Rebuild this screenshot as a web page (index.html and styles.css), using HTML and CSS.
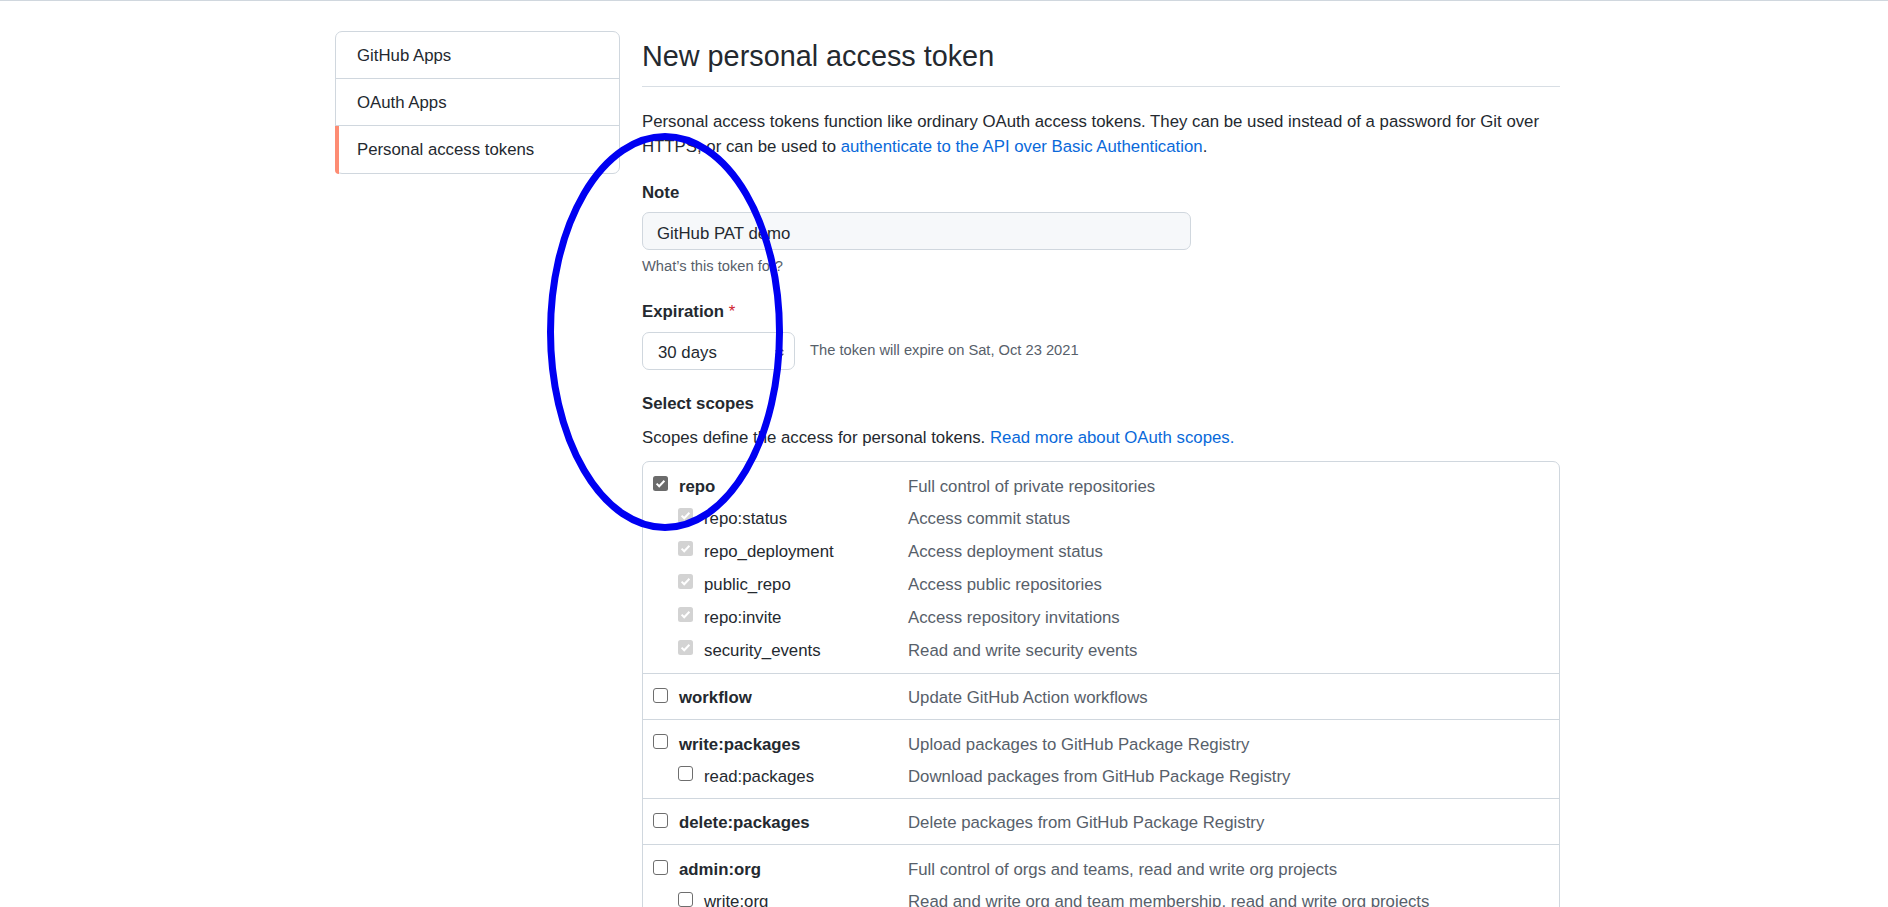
FILE: index.html
```html
<!DOCTYPE html>
<html lang="en">
<head>
<meta charset="utf-8">
<title>New personal access token</title>
<link rel="stylesheet" href="styles.css">
</head>
<body>
<div class="topline"></div>
<div class="layout">
  <nav class="menu">
    <a class="menu-item">GitHub Apps</a>
    <a class="menu-item">OAuth Apps</a>
    <a class="menu-item selected">Personal access tokens</a>
  </nav>
  <main class="main">
    <div class="subhead"><h2 class="subhead-heading">New personal access token</h2></div>
    <p class="lead">Personal access tokens function like ordinary OAuth access tokens. They can be used instead of a password for Git over HTTPS, or can be used to <a class="link">authenticate to the API over Basic Authentication</a>.</p>

    <div class="label label-note">Note</div>
    <input class="input" type="text" value="GitHub PAT demo">
    <div class="hint">What’s this token for?</div>

    <div class="label label-exp">Expiration <span class="req">*</span></div>
    <div class="select-row">
      <div class="select">
        <span>30 days</span>
        <svg class="select-arrow" width="19" height="19" viewBox="0 0 16 16"><path fill="#586069" d="M4.427 9.427l3.396 3.396a.251.251 0 00.354 0l3.396-3.396A.25.25 0 0011.396 9H4.604a.25.25 0 00-.177.427zM4.423 6.47L7.82 3.072a.25.25 0 01.354 0L11.57 6.47a.25.25 0 01-.177.427H4.6a.25.25 0 01-.177-.427z"/></svg>
      </div>
      <span class="expire-note">The token will expire on Sat, Oct 23 2021</span>
    </div>

    <div class="label label-scopes">Select scopes</div>
    <p class="scopes-intro">Scopes define the access for personal tokens. <a class="link">Read more about OAuth scopes.</a></p>

    <div class="scopes">
      <div class="scope-group">
        <div class="scope-row">
          <div class="scope-name top"><span class="cb cb-checked"><svg width="15" height="15" viewBox="0 0 15 15"><path d="M3.6 7.6l2.6 2.6 5.2-5.4" stroke="#fff" stroke-width="2" fill="none"/></svg></span>repo</div>
          <div class="scope-desc">Full control of private repositories</div>
        </div>
        <div class="scope-row tall">
          <div class="scope-name sub"><span class="cb cb-disabled"><svg width="15" height="15" viewBox="0 0 15 15"><path d="M3.6 7.6l2.6 2.6 5.2-5.4" stroke="#fff" stroke-width="2" fill="none"/></svg></span>repo:status</div>
          <div class="scope-desc">Access commit status</div>
        </div>
        <div class="scope-row tall">
          <div class="scope-name sub"><span class="cb cb-disabled"><svg width="15" height="15" viewBox="0 0 15 15"><path d="M3.6 7.6l2.6 2.6 5.2-5.4" stroke="#fff" stroke-width="2" fill="none"/></svg></span>repo_deployment</div>
          <div class="scope-desc">Access deployment status</div>
        </div>
        <div class="scope-row tall">
          <div class="scope-name sub"><span class="cb cb-disabled"><svg width="15" height="15" viewBox="0 0 15 15"><path d="M3.6 7.6l2.6 2.6 5.2-5.4" stroke="#fff" stroke-width="2" fill="none"/></svg></span>public_repo</div>
          <div class="scope-desc">Access public repositories</div>
        </div>
        <div class="scope-row tall">
          <div class="scope-name sub"><span class="cb cb-disabled"><svg width="15" height="15" viewBox="0 0 15 15"><path d="M3.6 7.6l2.6 2.6 5.2-5.4" stroke="#fff" stroke-width="2" fill="none"/></svg></span>repo:invite</div>
          <div class="scope-desc">Access repository invitations</div>
        </div>
        <div class="scope-row tall">
          <div class="scope-name sub"><span class="cb cb-disabled"><svg width="15" height="15" viewBox="0 0 15 15"><path d="M3.6 7.6l2.6 2.6 5.2-5.4" stroke="#fff" stroke-width="2" fill="none"/></svg></span>security_events</div>
          <div class="scope-desc">Read and write security events</div>
        </div>
      </div>

      <div class="scope-group">
        <div class="scope-row">
          <div class="scope-name top"><span class="cb cb-empty"></span>workflow</div>
          <div class="scope-desc">Update GitHub Action workflows</div>
        </div>
      </div>

      <div class="scope-group">
        <div class="scope-row">
          <div class="scope-name top"><span class="cb cb-empty"></span>write:packages</div>
          <div class="scope-desc">Upload packages to GitHub Package Registry</div>
        </div>
        <div class="scope-row">
          <div class="scope-name sub"><span class="cb cb-empty"></span>read:packages</div>
          <div class="scope-desc">Download packages from GitHub Package Registry</div>
        </div>
      </div>

      <div class="scope-group">
        <div class="scope-row">
          <div class="scope-name top"><span class="cb cb-empty"></span>delete:packages</div>
          <div class="scope-desc">Delete packages from GitHub Package Registry</div>
        </div>
      </div>

      <div class="scope-group">
        <div class="scope-row">
          <div class="scope-name top"><span class="cb cb-empty"></span>admin:org</div>
          <div class="scope-desc">Full control of orgs and teams, read and write org projects</div>
        </div>
        <div class="scope-row">
          <div class="scope-name sub"><span class="cb cb-empty"></span>write:org</div>
          <div class="scope-desc">Read and write org and team membership, read and write org projects</div>
        </div>
        <div class="scope-row">
          <div class="scope-name sub"><span class="cb cb-empty"></span>read:org</div>
          <div class="scope-desc">Read org and team membership, read org projects</div>
        </div>
      </div>
    </div>
  </main>
</div>
<svg class="annotation" width="250" height="410" viewBox="0 0 250 410"><ellipse cx="125" cy="205" rx="114.5" ry="195.5" fill="none" stroke="#0000f2" stroke-width="7"/></svg>
</body>
</html>
```

FILE: styles.css
```css
html, body {
  margin: 0;
  padding: 0;
  overflow: hidden;
}
body {
  position: relative;
  background: #ffffff;
  color: #24292f;
  font-family: "Liberation Sans", Arial, sans-serif;
  font-size: 16.8px;
  line-height: 25.2px;
}
.topline {
  height: 1px;
  background: #d0d7de;
}
.layout {
  display: flex;
  gap: 22px;
  margin-left: 335px;
  padding-top: 30px;
}
.menu {
  width: 285px;
  flex: none;
  align-self: flex-start;
  box-sizing: border-box;
  border: 1px solid #d0d7de;
  border-radius: 7px;
  display: flex;
  flex-direction: column;
}
.menu-item {
  position: relative;
  display: block;
  padding: 10.5px 21px;
  color: #24292f;
  text-decoration: none;
}
.menu-item + .menu-item {
  border-top: 1px solid #d0d7de;
}
.menu-item.selected::before {
  content: "";
  position: absolute;
  left: -1px;
  top: 0;
  bottom: -1px;
  width: 4px;
  background: #fd8c73;
  border-bottom-left-radius: 7px;
}
.main {
  width: 918px;
  flex: none;
}
.subhead {
  padding-top: 4px;
  padding-bottom: 7.8px;
  border-bottom: 1px solid #d8dee4;
  margin-bottom: 21.8px;
}
.subhead-heading {
  margin: 0;
  font-size: 28.8px;
  line-height: 43.2px;
  font-weight: 400;
}
.lead {
  margin: 0;
}
.link {
  color: #0969da;
  text-decoration: none;
}
.label {
  font-weight: 700;
}
.label-note { margin-top: 20.6px; }
.label-exp { margin-top: 20.8px; }
.label-scopes { margin-top: 20.8px; }
.req { color: #cf222e; font-weight: 400; }
.input {
  display: block;
  box-sizing: border-box;
  margin: 7px 0 0;
  width: 549px;
  height: 38px;
  padding: 5px 14px 0;
  font: inherit;
  font-size: 16.8px;
  color: #24292f;
  background: #f6f8fa;
  border: 1px solid #d0d7de;
  border-radius: 7px;
  outline: none;
}
.hint {
  margin-top: 6.4px;
  font-size: 14.7px;
  line-height: 21.6px;
  color: #57606a;
}
.select-row {
  display: flex;
  align-items: center;
  gap: 15px;
  margin-top: 8px;
}
.select {
  box-sizing: border-box;
  width: 153px;
  height: 38px;
  padding: 6.8px 5px 0 15px;
  border: 1px solid #d0d7de;
  border-radius: 7px;
  display: flex;
  align-items: flex-start;
  justify-content: space-between;
}
.select-arrow {
  margin-top: 3px;
}
.expire-note {
  font-size: 14.7px;
  line-height: 21.6px;
  color: #57606a;
}
.scopes-intro {
  margin: 8.8px 0 0;
}
.scopes {
  margin-top: 11px;
  border: 1px solid #d0d7de;
  border-radius: 7px;
}
.scope-group {
  padding: 7px 10px 6.6px;
}
.scope-group + .scope-group {
  border-top: 1px solid #d0d7de;
}
.scope-row {
  display: flex;
  height: 32px;
  box-sizing: border-box;
  padding-top: 4.6px;
}
.scope-row.tall {
  height: 33px;
}
.scope-name {
  width: 255px;
  flex: none;
  box-sizing: border-box;
  display: flex;
  align-items: flex-start;
  gap: 11px;
}
.scope-name.top { font-weight: 700; }
.scope-name.sub { padding-left: 25px; }
.scope-desc {
  color: #57606a;
}
.cb {
  flex: none;
  width: 15px;
  height: 15px;
  margin-top: 2.6px;
  box-sizing: border-box;
  border-radius: 2.5px;
  display: block;
}
.cb svg { display: block; }
.cb-checked { background: #6b6b6b; }
.cb-disabled { background: #d3d3d3; }
.cb-empty {
  border: 1px solid #6e6e6e;
  border-radius: 3px;
  background: #fff;
}
.annotation {
  position: absolute;
  left: 540px;
  top: 127px;
}
```
